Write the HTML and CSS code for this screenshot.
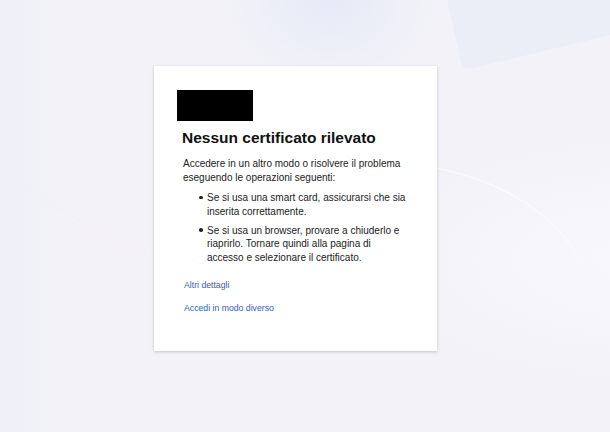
FILE: index.html
```html
<!DOCTYPE html>
<html lang="it">
<head>
    <meta charset="UTF-8">
    <meta name="viewport" content="width=device-width, initial-scale=1.0">
    <title>Nessun certificato rilevato</title>
    <link rel="stylesheet" href="styles.css">
</head>
<body>
    <div class="carta">
        <div class="logo"></div>
        <h1>Nessun certificato rilevato</h1>
        <p class="intro">Accedere in un altro modo o risolvere il problema eseguendo le operazioni seguenti:</p>
        <ul class="passi">
            <li>Se si usa una smart card, assicurarsi che sia inserita correttamente.</li>
            <li>Se si usa un browser, provare a chiuderlo e riaprirlo. Tornare quindi alla pagina di accesso e selezionare il certificato.</li>
        </ul>
        <div class="link">
            <a href="#">Altri dettagli</a>
            <a href="#">Accedi in modo diverso</a>
        </div>
    </div>
</body>
</html>
```

FILE: styles.css
```css
html, body {
    height: 100%;
}
body {
    margin: 0;
    font-family: "Liberation Sans", Arial, sans-serif;
    color: #222;
    background-color: #f3f2f8;
    background-image:
        url("data:image/svg+xml,%3Csvg xmlns='http://www.w3.org/2000/svg' width='610' height='432'%3E%3Cpath d='M447 0 L610 0 L610 35 L474 68 Q463 71 461 62 Z' fill='%23eceef7'/%3E%3Cpath d='M0 170 Q110 250 260 300' stroke='%23f6eef2' stroke-width='1' fill='none'/%3E%3Cpath d='M437 168 Q540 190 580 260' stroke='%23fafafd' stroke-width='1.5' fill='none'/%3E%3C/svg%3E"),
        radial-gradient(ellipse 110px 90px at 330px 0, rgba(228, 234, 247, 0.9), rgba(228, 234, 247, 0) 100%),
        radial-gradient(ellipse 260px 120px at 640px 260px, rgba(250, 250, 253, 0.8), rgba(250, 250, 253, 0) 100%),
        linear-gradient(90deg, rgba(238, 240, 248, 0.8) 0, rgba(243, 242, 248, 0) 70px);
    background-repeat: no-repeat;
    padding: 66px 0 0 154px;
    box-sizing: border-box;
    overflow: hidden;
}
.carta {
    width: 283px;
    height: 285px;
    box-sizing: border-box;
    background: #fff;
    box-shadow: 0 1px 3px rgba(0, 0, 0, 0.2);
    padding: 24px 23px 0 23px;
}
.logo {
    width: 76px;
    height: 31px;
    background: #000;
}
h1 {
    font-size: 15.5px;
    font-weight: bold;
    color: #111;
    margin: 6px 0 0 5px;
    line-height: 22px;
}
.intro {
    font-size: 10px;
    line-height: 14px;
    margin: 8px 0 0 6px;
}
.passi {
    list-style: none;
    font-size: 10px;
    line-height: 13.5px;
    margin: 6px 8px 0 6px;
    padding-left: 24px;
}
.passi li {
    margin-bottom: 5.5px;
}
.passi li::before {
    content: "";
    display: inline-block;
    width: 3.5px;
    height: 3.5px;
    border-radius: 50%;
    background: #222;
    margin-left: -8px;
    margin-right: 4.5px;
    vertical-align: 2px;
}
.link {
    margin: 16px 0 0 7px;
}
.link a {
    display: block;
    font-size: 8.7px;
    line-height: 11px;
    color: #3163ad;
    text-decoration: none;
    margin-bottom: 12px;
}
```
